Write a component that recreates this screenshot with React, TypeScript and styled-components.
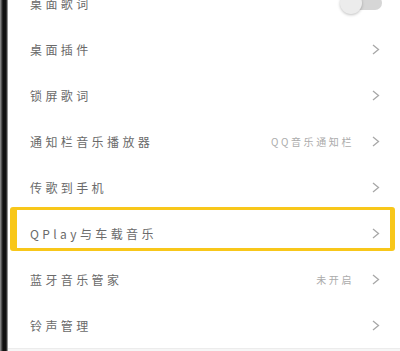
import React from "react";
import styled, { createGlobalStyle } from "styled-components";

const Global = createGlobalStyle`
  html, body { margin: 0; padding: 0; background: #ffffff; }
  body { width: 400px; height: 351px; overflow: hidden; font-family: "Noto Sans CJK SC", "Noto Sans", sans-serif; }
`;

const Frame = styled.div`
  display: flex;
  width: 400px;
  height: 351px;
  overflow: hidden;
  background: #ffffff;
`;

const Edge = styled.div`
  flex: 0 0 8px;
  background: linear-gradient(to right, #9a9a9a 0px, #3a3a3a 2px, #111 3px, #111 6px, #555 7px, #cfcfcf 8px);
`;

const Screen = styled.div`
  flex: 1;
  display: flex;
  flex-direction: column;
  overflow: hidden;
`;

const List = styled.div`
  display: flex;
  flex-direction: column;
  margin-top: -20px;
  background: #ffffff;
`;

const Row = styled.div<{ $highlight?: boolean }>`
  position: relative;
  display: flex;
  align-items: center;
  height: 46px;
  padding: 0 20px 0 22px;
  box-sizing: border-box;
  &::after {
    content: "";
    display: ${(p) => (p.$highlight ? "block" : "none")};
    position: absolute;
    left: 2px;
    right: 5px;
    top: -3px;
    bottom: 5px;
    border-style: solid;
    border-color: #f8c71a;
    border-width: 3px 5px 3px 7px;
    border-radius: 3px;
    pointer-events: none;
  }
`;

const Label = styled.span`
  flex: 1;
  font-size: 12px;
  letter-spacing: 3.4px;
  color: #6a6a6a;
  white-space: nowrap;
`;

const Value = styled.span`
  font-size: 10px;
  letter-spacing: 2.6px;
  color: #ababab;
  margin-right: 18px;
  white-space: nowrap;
`;

const Chevron = styled.svg`
  width: 8px;
  height: 11px;
  flex: 0 0 auto;
`;

const Toggle = styled.div`
  position: relative;
  width: 42px;
  height: 22px;
  margin-right: -2px;
`;

const Track = styled.div`
  position: absolute;
  left: 12px;
  right: 0;
  top: 4px;
  height: 14px;
  border-radius: 7px;
  background: #d6d6d6;
`;

const Knob = styled.div`
  position: absolute;
  left: 0;
  top: 0;
  width: 22px;
  height: 22px;
  border-radius: 50%;
  background: #ececec;
  box-shadow: 0 1px 3px rgba(0, 0, 0, 0.25);
`;

const Footer = styled.div`
  flex: 1;
  background: #f6f6f6;
  border-top: 1px solid #ececec;
`;

const Arrow = () => (
  <Chevron viewBox="0 0 8 11">
    <polyline points="1,1 6.5,5.5 1,10" fill="none" stroke="#a8a8a8" strokeWidth="1.3" />
  </Chevron>
);

type Item = { label: string; value?: string; toggle?: boolean; highlight?: boolean };

const items: Item[] = [
  { label: "桌面歌词", toggle: true },
  { label: "桌面插件" },
  { label: "锁屏歌词" },
  { label: "通知栏音乐播放器", value: "QQ音乐通知栏" },
  { label: "传歌到手机" },
  { label: "QPlay与车载音乐", highlight: true },
  { label: "蓝牙音乐管家", value: "未开启" },
  { label: "铃声管理" },
];

export default function App() {
  return (
    <>
      <Global />
      <Frame>
        <Edge />
        <Screen>
          <List>
            {items.map((it) => (
              <Row key={it.label} $highlight={it.highlight}>
                <Label>{it.label}</Label>
                {it.value && <Value>{it.value}</Value>}
                {it.toggle ? (
                  <Toggle>
                    <Track />
                    <Knob />
                  </Toggle>
                ) : (
                  <Arrow />
                )}
              </Row>
            ))}
          </List>
          <Footer />
        </Screen>
      </Frame>
    </>
  );
}
